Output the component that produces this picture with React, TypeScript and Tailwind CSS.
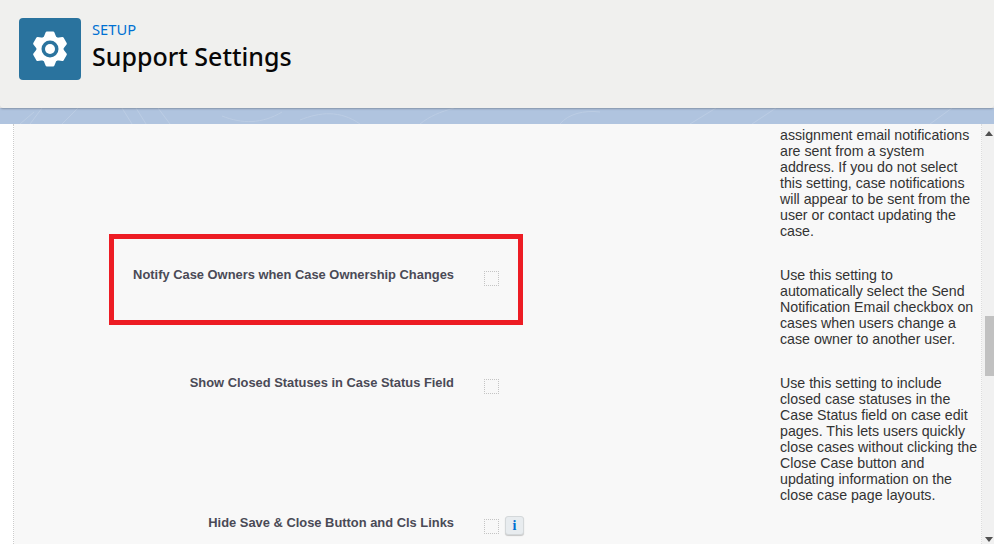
const SANS = "font-['Liberation_Sans',Arial,sans-serif]";

const ROWS = [
  {
    label: "",
    height: "h-[140px]",
    help: [
      "assignment email notifications",
      "are sent from a system",
      "address. If you do not select",
      "this setting, case notifications",
      "will appear to be sent from the",
      "user or contact updating the",
      "case.",
    ],
    checkbox: false,
    info: false,
  },
  {
    label: "Notify Case Owners when Case Ownership Changes",
    height: "h-[108px]",
    help: [
      "Use this setting to",
      "automatically select the Send",
      "Notification Email checkbox on",
      "cases when users change a",
      "case owner to another user.",
    ],
    checkbox: true,
    info: false,
  },
  {
    label: "Show Closed Statuses in Case Status Field",
    height: "h-[140px]",
    help: [
      "Use this setting to include",
      "closed case statuses in the",
      "Case Status field on case edit",
      "pages. This lets users quickly",
      "close cases without clicking the",
      "Close Case button and",
      "updating information on the",
      "close case page layouts.",
    ],
    checkbox: true,
    info: false,
  },
  {
    label: "Hide Save & Close Button and Cls Links",
    height: "h-[40px]",
    help: [],
    checkbox: true,
    info: true,
  },
];

// six teeth, one pointing straight up
function gearPath() {
  const pts: string[] = [];
  for (let i = 0; i < 6; i++) {
    const a = -90 + i * 60;
    const spots: [number, number][] = [
      [12.5, a - 24],
      [16.5, a - 11],
      [16.5, a + 11],
      [12.5, a + 24],
    ];
    for (const [r, deg] of spots) {
      const t = (deg * Math.PI) / 180;
      pts.push(`${(18 + r * Math.cos(t)).toFixed(2)} ${(18 + r * Math.sin(t)).toFixed(2)}`);
    }
  }
  return `M${pts.join("L")}Z`;
}

function GearIcon() {
  return (
    <svg width="36" height="36" viewBox="0 0 36 36" fill="none">
      <path d={gearPath()} fill="#ffffff" stroke="#ffffff" strokeWidth="2.5" strokeLinejoin="round" />
      <circle cx="18" cy="18" r="8.5" fill="#2a739e" />
      <circle cx="18" cy="18" r="5" fill="#ffffff" />
    </svg>
  );
}

function TopoBand() {
  return (
    <svg className="h-full w-full" preserveAspectRatio="none" viewBox="0 0 994 16" fill="none">
      <g stroke="#bccde4" strokeWidth="1">
        <path d="M20 16 34 4M30 16 42 0M62 16 78 0M132 16 122 0M146 16 136 0M170 16 158 0" />
        <path d="M222 8c20 8 40 8 60-4M300 12c20-8 40-10 60 4M420 16c10-8 20-12 34-16" />
        <path d="M560 16c8-10 24-14 40-12M690 16l26-16M752 16 776 0M930 16l22-16" />
      </g>
    </svg>
  );
}

function FormRow({ row }: { row: (typeof ROWS)[number] }) {
  return (
    <div className={`flex ${row.height}`}>
      <div className="w-[440px] shrink-0 text-right text-[12.9px] leading-[16px] font-bold text-[#4a4a56]">
        {row.label}
      </div>
      <div className="flex w-[326px] shrink-0 items-start gap-[6px] pl-[30px]">
        {row.checkbox && (
          <span className="mt-[4px] h-[15px] w-[15px] border border-dotted border-[#c4c4c4]" />
        )}
        {row.info && (
          <span className="mt-[1px] flex h-[19px] w-[19px] items-center justify-center rounded-[3px] border border-[#d4d8da] bg-[#e8ecef] font-['Liberation_Serif',serif] text-[14px] leading-none font-bold text-[#0070d2] shadow-[0_1px_1px_rgba(0,0,0,0.2)]">
            i
          </span>
        )}
      </div>
      <div className="text-[14.2px] leading-[16px] whitespace-nowrap text-[#333333]">
        {row.help.map((line) => (
          <div key={line}>{line}</div>
        ))}
      </div>
    </div>
  );
}

export default function App() {
  return (
    <div className={`relative h-[554px] w-[994px] overflow-hidden bg-white ${SANS}`}>
      <header className="relative z-10 flex h-[108px] items-start gap-[11px] rounded-b-[3px] bg-[#f0f0ee] pt-[18px] pl-[19px] shadow-[0_1px_2px_rgba(0,0,0,0.25)]">
        <div className="flex h-[62px] w-[62px] items-center justify-center rounded-[4px] bg-[#2a739e]">
          <GearIcon />
        </div>
        <div className="font-['Noto_Sans',sans-serif]">
          <div className="mt-[2px] text-[14.7px] leading-[18px] text-[#0070d2]">SETUP</div>
          <h1 className="mt-[3px] text-[25px] leading-[30px] font-medium text-[#080707]">Support Settings</h1>
        </div>
      </header>

      <div className="h-[16px] bg-[#b0c4df]">
        <TopoBand />
      </div>

      <div className="flex h-[420px]">
        <div className="w-[14px] shrink-0 border-r border-dotted border-[#cccccc] bg-white" />
        <main className="w-[968px] shrink-0 overflow-hidden border-r border-dotted border-[#dddddd] bg-[#f8f8f8]">
          <div className="pt-[3px]">
            {ROWS.map((row, i) => (
              <FormRow key={i} row={row} />
            ))}
          </div>
        </main>
        <div className="relative flex-1 bg-[#f1f1f1]">
          <span className="absolute top-[7px] right-[1px] h-0 w-0 border-x-[4px] border-b-[5px] border-x-transparent border-b-[#505050]" />
          <span className="absolute top-[192px] right-0 h-[60px] w-[9px] bg-[#c1c1c1]" />
          <span className="absolute right-[1px] bottom-[2px] h-0 w-0 border-x-[4px] border-t-[5px] border-x-transparent border-t-[#505050]" />
        </div>
      </div>

      <div className="absolute top-[234px] left-[109px] h-[91px] w-[414px] border-[5px] border-[#ed1c24]" />
    </div>
  );
}
